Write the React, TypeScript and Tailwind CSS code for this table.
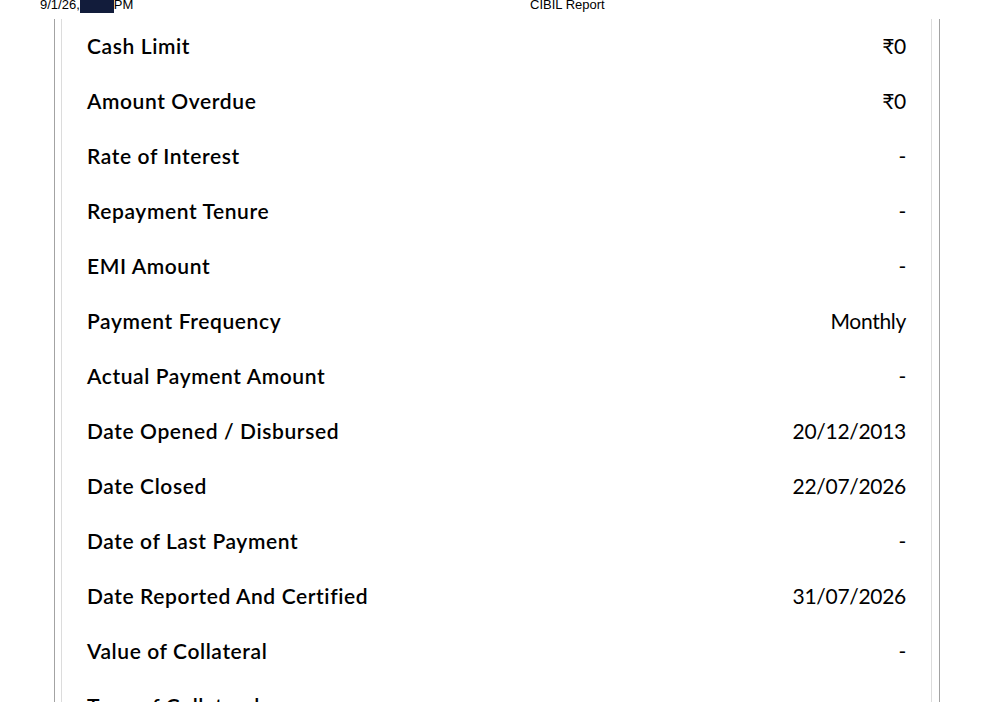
const rows: [string, string][] = [
  ['Cash Limit', '₹0'],
  ['Amount Overdue', '₹0'],
  ['Rate of Interest', '-'],
  ['Repayment Tenure', '-'],
  ['EMI Amount', '-'],
  ['Payment Frequency', 'Monthly'],
  ['Actual Payment Amount', '-'],
  ['Date Opened / Disbursed', '20/12/2013'],
  ['Date Closed', '22/07/2026'],
  ['Date of Last Payment', '-'],
  ['Date Reported And Certified', '31/07/2026'],
  ['Value of Collateral', '-'],
  ['Type of Collateral', '-'],
]

export default function App() {
  return (
    <div className="h-[702px] overflow-hidden bg-white">
      <div className="relative h-[19px] font-['Liberation_Sans',Arial,sans-serif] text-[13px] leading-none text-black">
        <div className="absolute left-[40px] top-[-2px] flex items-start">
          <span>9/1/26,</span>
          <span className="mt-[2px] inline-block h-[13px] w-[34px] bg-[#121c3b]" />
          <span>PM</span>
        </div>
        <div className="absolute left-[530px] top-[-2px]">CIBIL Report</div>
      </div>
      <div className="ml-[54px] w-[886px] border-x border-[#a3a3a3] pl-[6px] pr-[7px]">
        <div className="border-x border-[#dcdcdc] px-[25px] font-['Lato','Noto_Sans',sans-serif] text-[21px] text-black">
          {rows.map(([label, value]) => (
            <div key={label} className="flex h-[55px] items-center justify-between pb-[2px]">
              <span className="font-semibold tracking-[0.6px]">{label}</span>
              <span className="font-normal tracking-[-0.3px]">{value}</span>
            </div>
          ))}
        </div>
      </div>
    </div>
  )
}
